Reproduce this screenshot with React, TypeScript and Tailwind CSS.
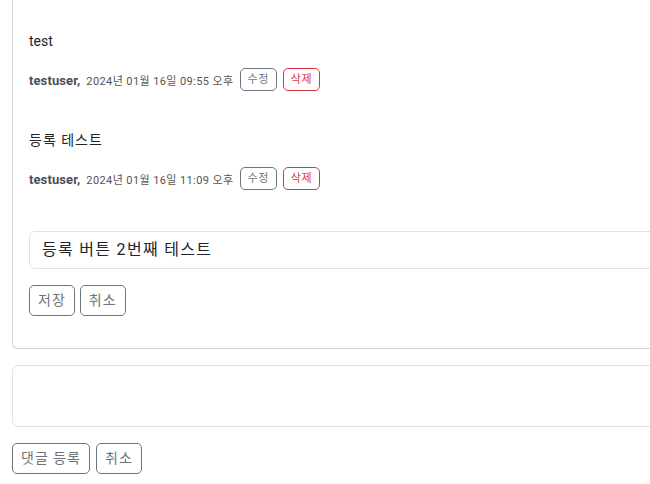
import React from "react";

const FONT = 'Roboto, "Noto Sans CJK KR", sans-serif';

function Meta({ date }: { date: string }) {
  return (
    <div className="flex items-center h-[24px] mt-[16px]">
      <div className="flex items-baseline pt-[4px]">
        <span className="text-[13px] font-bold text-[#495057] tracking-[0.1px]">testuser,</span>
        <span className="text-[11px] text-[#555] ml-[6px] tracking-[0.4px]">{date}</span>
      </div>
      <button className="ml-[6px] h-[23px] px-[7px] text-[11px] tracking-[0.5px] leading-none text-[#6c757d] border border-[#6c757d] rounded-[5px] bg-white">
        수정
      </button>
      <button className="ml-[6px] h-[23px] px-[7px] text-[11px] tracking-[0.5px] leading-none text-[#dc3545] border border-[#dc3545] rounded-[5px] bg-white">
        삭제
      </button>
    </div>
  );
}

function Comment({ text, date, first }: { text: string; date: string; first?: boolean }) {
  return (
    <div className={first ? "pt-[31px]" : "pt-[39px]"}>
      <p className="h-[20px] leading-[20px] text-[14px] text-[#212529] tracking-[1px]">{text}</p>
      <Meta date={date} />
    </div>
  );
}

const btn =
  "h-[31px] px-[8px] text-[14px] tracking-[1px] text-[#6c757d] border border-[#6c757d] rounded-[5px] bg-white";

export default function App() {
  return (
    <div className="w-[650px] h-[484px] overflow-hidden bg-white" style={{ fontFamily: FONT }}>
      <div className="ml-[12px] w-[700px] border-l border-b border-[#d3d3d3] rounded-bl-[6px] pl-[16px] pb-[32px]">
        <div className="pt-[31px]">
          <p className="h-[20px] leading-[20px] text-[14px] text-[#212529]">test</p>
          <Meta date="2024년 01월 16일 09:55 오후" />
        </div>
        <div className="pt-[39px]">
          <p className="h-[20px] leading-[20px] text-[14px] text-[#212529] tracking-[1px]">등록 테스트</p>
          <Meta date="2024년 01월 16일 11:09 오후" />
        </div>
        <div className="mt-[41px] h-[38px] border border-[#dee2e6] rounded-[6px] px-[12px] flex items-center text-[16px] tracking-[1.3px] text-[#212529]">
          등록 버튼 2번째 테스트
        </div>
        <div className="flex gap-[5px] mt-[16px]">
          <button className={btn}>저장</button>
          <button className={btn}>취소</button>
        </div>
      </div>
      <div className="ml-[12px] mt-[16px] w-[700px] h-[62px] border border-[#dee2e6] rounded-[6px]" />
      <div className="ml-[12px] flex gap-[6px] mt-[16px]">
        <button className={btn}>댓글 등록</button>
        <button className={btn}>취소</button>
      </div>
    </div>
  );
}
